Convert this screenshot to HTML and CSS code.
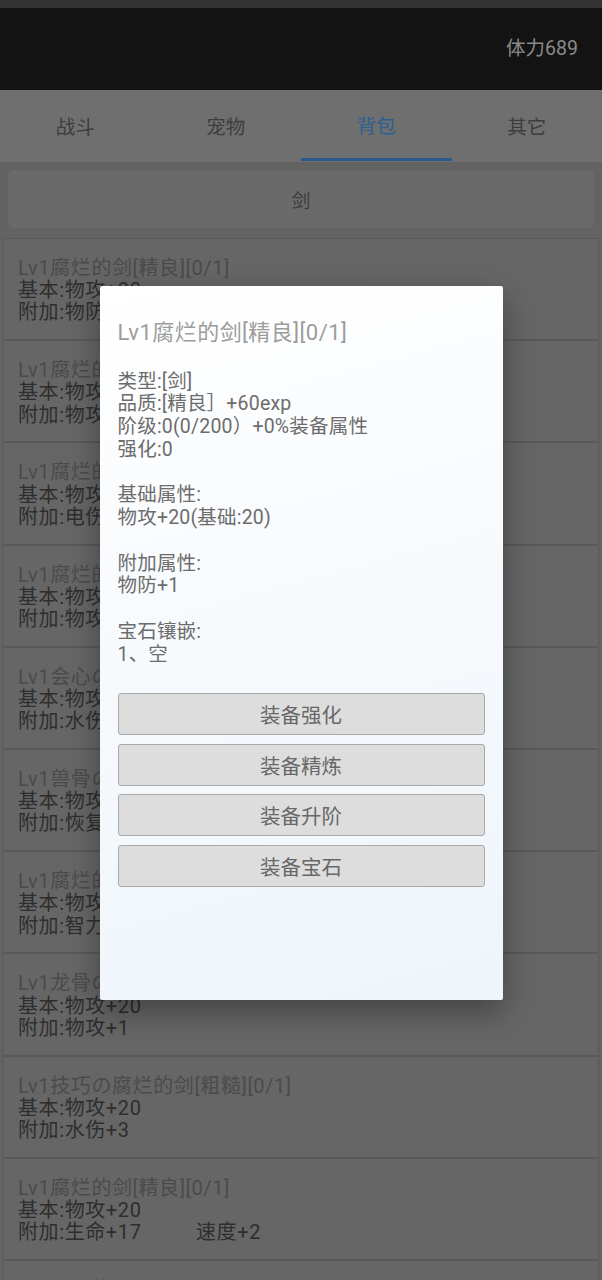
FILE: index.html
```html
<!DOCTYPE html>
<html lang="zh-CN">
<head>
<meta charset="utf-8">
<title>背包</title>
<link rel="stylesheet" href="styles.css">
</head>
<body>
<div class="page">
  <div class="status"></div>
  <header class="appbar"><span class="stamina">体力689</span></header>
  <nav class="tabs">
    <div class="tab">战斗</div>
    <div class="tab">宠物</div>
    <div class="tab active">背包</div>
    <div class="tab">其它</div>
  </nav>
  <div class="filter">剑</div>
  <div class="list">
    <div class="item"><div class="name">Lv1腐烂的剑[精良][0/1]</div><div class="line">基本:物攻+20</div><div class="line">附加:物防+1</div></div>
    <div class="item"><div class="name">Lv1腐烂的剑[精良][0/1]</div><div class="line">基本:物攻+20</div><div class="line">附加:物攻+1</div></div>
    <div class="item"><div class="name">Lv1腐烂的剑[精良][0/1]</div><div class="line">基本:物攻+20</div><div class="line">附加:电伤+2</div></div>
    <div class="item"><div class="name">Lv1腐烂的剑[精良][0/1]</div><div class="line">基本:物攻+20</div><div class="line">附加:物攻+1</div></div>
    <div class="item"><div class="name">Lv1会心の腐烂的剑[粗糙][0/1]</div><div class="line">基本:物攻+20</div><div class="line">附加:水伤+3</div></div>
    <div class="item"><div class="name">Lv1兽骨の腐烂的剑[粗糙][0/1]</div><div class="line">基本:物攻+20</div><div class="line">附加:恢复+2</div></div>
    <div class="item"><div class="name">Lv1腐烂的剑[精良][0/1]</div><div class="line">基本:物攻+20</div><div class="line">附加:智力+1</div></div>
    <div class="item"><div class="name">Lv1龙骨の腐烂的剑[粗糙][0/1]</div><div class="line">基本:物攻+20</div><div class="line">附加:物攻+1</div></div>
    <div class="item"><div class="name">Lv1技巧の腐烂的剑[粗糙][0/1]</div><div class="line">基本:物攻+20</div><div class="line">附加:水伤+3</div></div>
    <div class="item"><div class="name">Lv1腐烂的剑[精良][0/1]</div><div class="line">基本:物攻+20</div><div class="line"><span class="cell">附加:生命+17</span><span>速度+2</span></div></div>
    <div class="item"><div class="name">Lv1腐烂的剑[精良][0/1]</div><div class="line">基本:物攻+20</div><div class="line">附加:物防+1</div></div>
  </div>
</div>

<div class="scrim">
  <div class="dialog">
    <div class="d-title">Lv1腐烂的剑[精良][0/1]</div>
    <div class="d-body">
      <div>类型:[剑]</div>
      <div>品质:[精良］+60exp</div>
      <div>阶级:0(0/200）+0%装备属性</div>
      <div>强化:0</div>
      <div class="blank"></div>
      <div>基础属性:</div>
      <div>物攻+20(基础:20)</div>
      <div class="blank"></div>
      <div>附加属性:</div>
      <div>物防+1</div>
      <div class="blank"></div>
      <div>宝石镶嵌:</div>
      <div>1、空</div>
    </div>
    <div class="actions">
      <div class="btn">装备强化</div>
      <div class="btn">装备精炼</div>
      <div class="btn">装备升阶</div>
      <div class="btn">装备宝石</div>
    </div>
  </div>
</div>
</body>
</html>
```
FILE: styles.css
```css
html, body {
  margin: 0;
  padding: 0;
}
body {
  width: 602px;
  height: 1280px;
  overflow: hidden;
  background: #636363;
  font-family: "Roboto", "Noto Sans CJK SC", sans-serif;
  position: relative;
}
.page {
  display: flex;
  flex-direction: column;
}
.status {
  height: 8px;
  background: #333333;
}
.appbar {
  height: 82px;
  background: #131313;
  display: flex;
  align-items: center;
  justify-content: flex-end;
  padding-right: 24px;
}
.stamina {
  color: #8a8a8a;
  font-size: 19.5px;
  line-height: 24px;
}
.tabs {
  height: 72px;
  background: #6f6f6f;
  display: grid;
  grid-template-columns: repeat(4, 1fr);
}
.tab {
  display: flex;
  align-items: center;
  justify-content: center;
  font-size: 19.5px;
  color: #3d3d3d;
  padding-top: 1px;
  box-sizing: border-box;
  border-bottom: 3px solid transparent;
}
.tab.active {
  color: #2d5f91;
  border-bottom-color: #2a5a8e;
  margin-bottom: 1px;
}
.filter {
  margin: 8px 8px 0;
  height: 58px;
  border-radius: 6px;
  background: #6a6a6a;
  display: flex;
  align-items: center;
  justify-content: center;
  font-size: 19px;
  color: #3d3d3d;
}
.list {
  margin-top: 10px;
  padding: 0 3px;
  display: flex;
  flex-direction: column;
}
.item {
  border: 1px solid #595959;
  background: #666666;
  padding: 18px 14px 15.6px;
  font-size: 20px;
  line-height: 22.2px;
  letter-spacing: 0.6px;
}
.name {
  color: #4b4b4b;
  white-space: nowrap;
}
.line {
  color: #2e2e2e;
  white-space: nowrap;
}
.cell {
  display: inline-block;
  width: 178px;
}
.scrim {
  position: absolute;
  inset: 0;
  display: flex;
  justify-content: center;
  align-items: flex-start;
  padding-top: 286px;
  box-sizing: border-box;
}
.dialog {
  width: 403px;
  height: 714px;
  box-sizing: border-box;
  padding: 34px 18px 0;
  background: linear-gradient(165deg, #ffffff 0%, #f7fafd 45%, #eef5fb 100%);
  border-radius: 2px;
  box-shadow: 0 12px 32px rgba(0, 0, 0, 0.35);
}
.d-title {
  font-size: 22px;
  line-height: 26px;
  letter-spacing: 0.45px;
  color: #9c9c9c;
  margin-bottom: 24.6px;
}
.d-body {
  font-size: 19.5px;
  line-height: 22.75px;
  letter-spacing: 0.2px;
  color: #6c6c6c;
}
.blank {
  height: 22.75px;
}
.actions {
  margin-top: 27px;
  display: flex;
  flex-direction: column;
  gap: 8.5px;
}
.btn {
  height: 42px;
  box-sizing: border-box;
  border: 1px solid #a9a9a9;
  border-radius: 3px;
  background: #dddddd;
  display: flex;
  align-items: center;
  justify-content: center;
  font-size: 20.5px;
  color: #686868;
}
```
